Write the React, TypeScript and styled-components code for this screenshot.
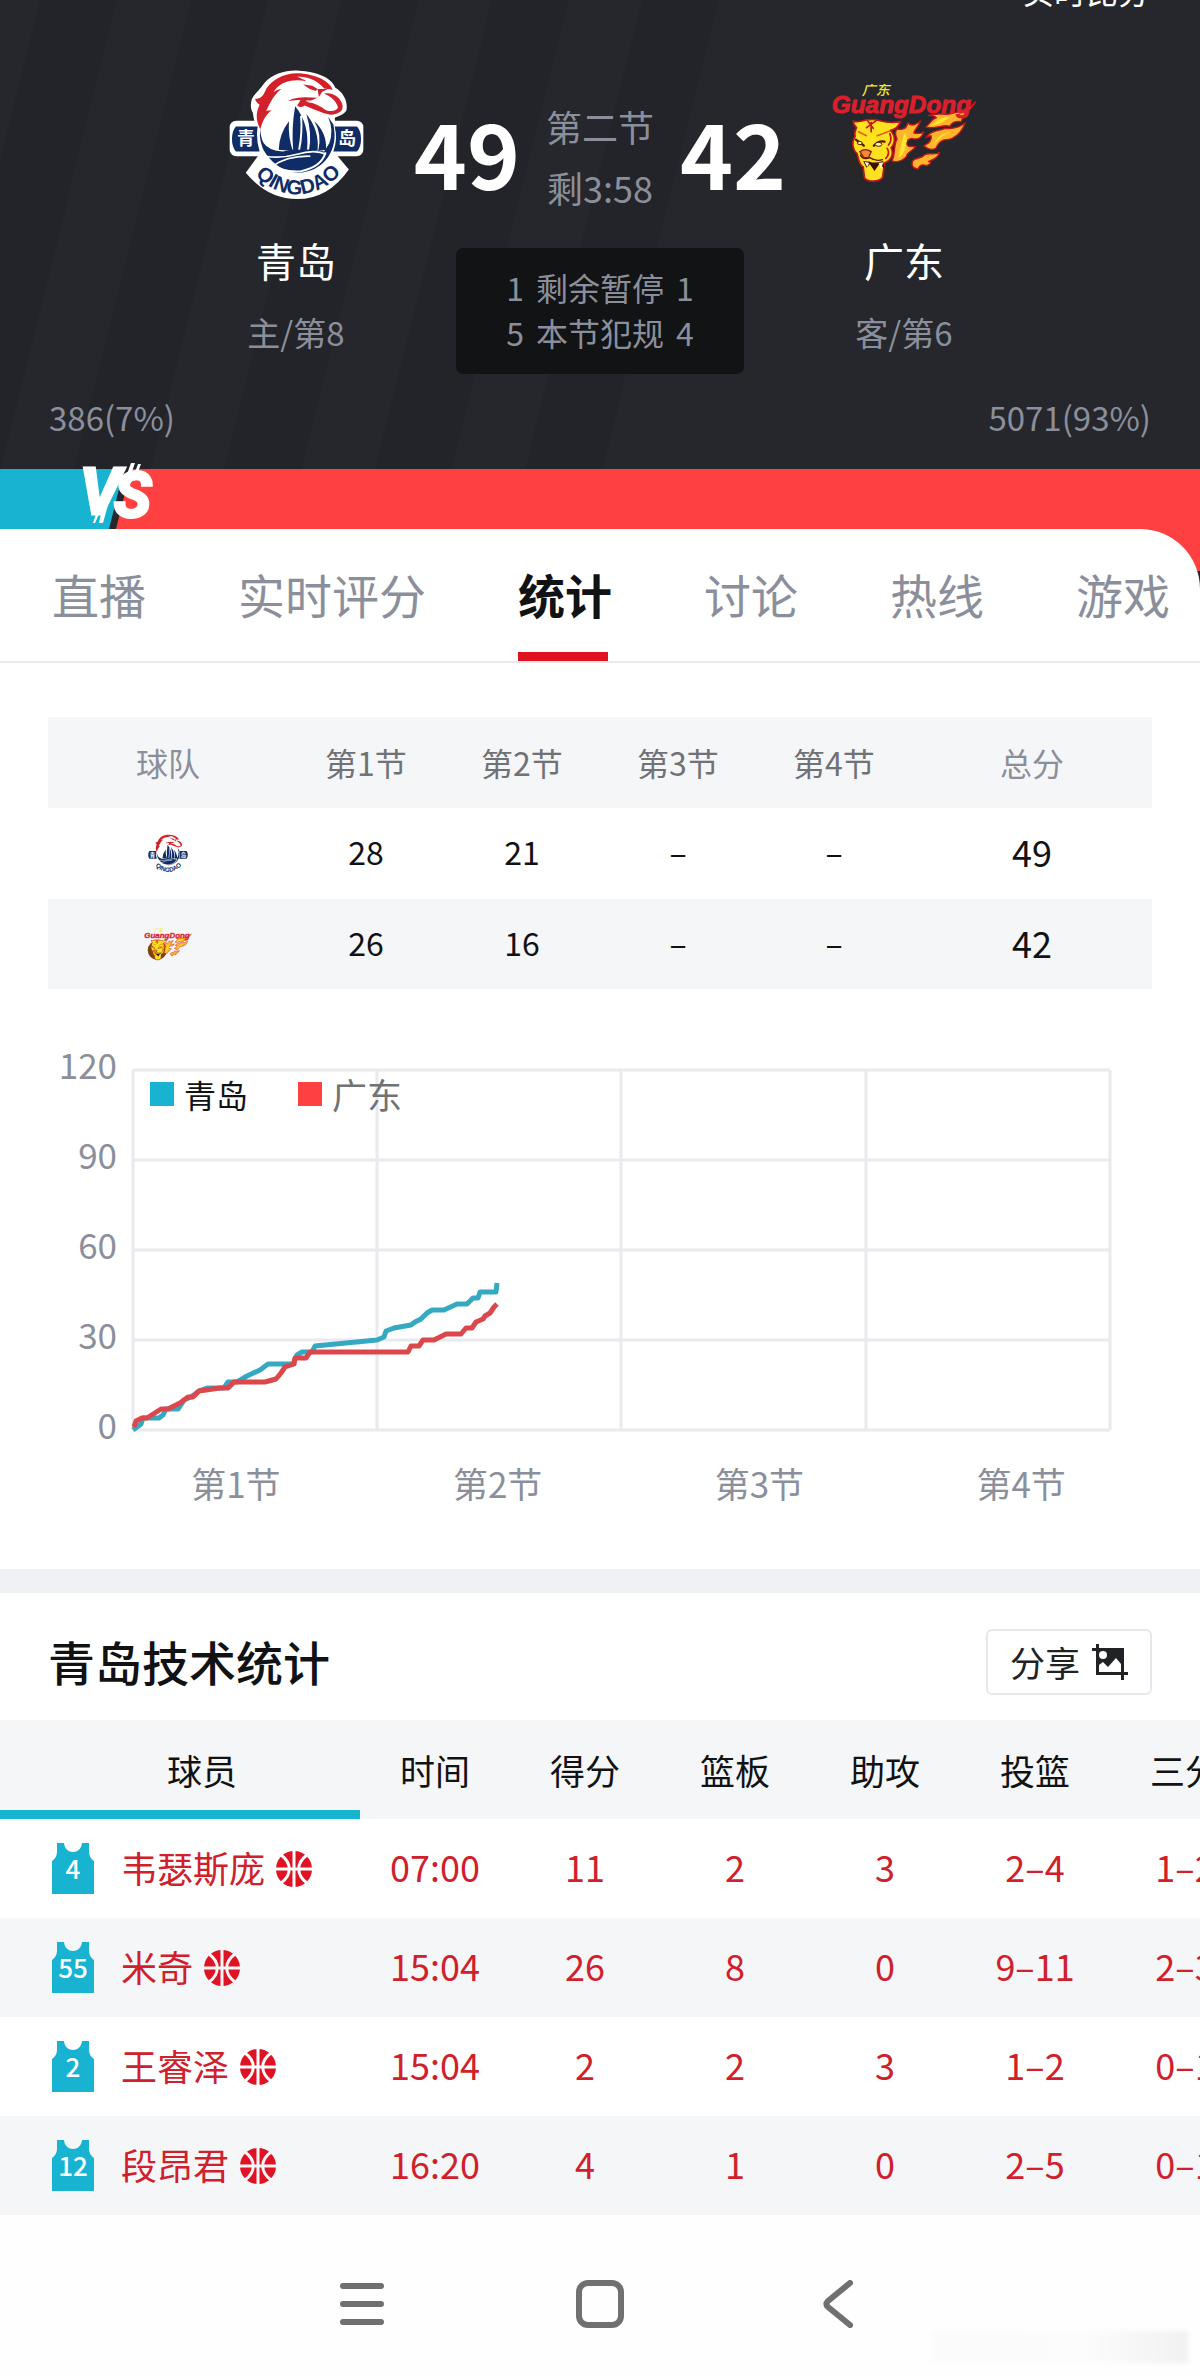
import React from "react";
import styled, { createGlobalStyle } from "styled-components";

const teal = "#17b3d1";
const red = "#ff4040";
const muted = "#8b8f9b";
const stripe = "#f5f6f8";
const ink = "#111214";

const GlobalStyle = createGlobalStyle`
  * { box-sizing: border-box; }
  body {
    margin: 0;
    background: #fff;
    color: ${ink};
    font-family: "Noto Sans CJK SC", "Noto Sans", sans-serif;
  }
  button { font: inherit; color: inherit; border: 0; background: none; padding: 0; cursor: pointer; }
  a { color: inherit; text-decoration: none; }
  table { border-collapse: collapse; border-spacing: 0; table-layout: fixed; }
  th, td { padding: 0; font-weight: 400; text-align: center; }
  svg { display: block; }
`;

const Page = styled.div`
  overflow: hidden;
`;

/* ---------- scoreboard ---------- */

const Scoreboard = styled.header`
  color: #fff;
  padding-bottom: 31px;
  background:
    linear-gradient(104deg, transparent 0 698px, #25272c 698px),
    repeating-linear-gradient(104deg, #25272c 0 39px, #222429 39px 114px, #25272c 114px 146px);
`;

const TopBar = styled.div`
  display: flex;
  align-items: flex-end;
  justify-content: flex-end;
  height: 24px;
  padding: 0 50px 16px;
  font-size: 32px;
  line-height: 36px;
`;

const Matchup = styled.div`
  display: grid;
  grid-template-columns: 1fr 368px 1fr;
  padding: 0 176px;
`;

const Team = styled.div`
  display: flex;
  flex-direction: column;
  align-items: center;
  padding-top: 45px;
`;

const LogoBox = styled.div`
  display: flex;
  align-items: center;
  height: 130px;
`;

const TeamName = styled.h2`
  margin: 31px 0 18px;
  font-size: 40px;
  line-height: 60px;
  font-weight: 400;
`;

const TeamRank = styled.span`
  color: ${muted};
  font-size: 33px;
  line-height: 48px;
`;

const Middle = styled.div`
  display: flex;
  flex-direction: column;
  align-items: center;
  padding-top: 72px;
`;

const ScoreLine = styled.div`
  display: flex;
  align-items: center;
  gap: 26px;
  white-space: nowrap;
`;

const Score = styled.strong`
  padding-bottom: 12px;
  font-size: 90px;
  line-height: 110px;
  font-weight: 700;
`;

const Clock = styled.div`
  color: ${muted};
  font-size: 36px;
  line-height: 61px;
  text-align: center;
`;

const FoulBox = styled.dl`
  margin: 30px 0 0;
  min-width: 288px;
  padding: 17px 0 19px;
  border-radius: 7px;
  background: #121315;
  color: ${muted};
  font-size: 32px;
  line-height: 45px;
`;

const FoulRow = styled.div`
  display: flex;
  justify-content: center;
  gap: 12px;
  dd { margin: 0; }
`;

const Votes = styled.div`
  display: flex;
  justify-content: space-between;
  margin-top: 22px;
  padding: 0 49px;
  color: ${muted};
  font-size: 33px;
  line-height: 42px;
`;

const VoteBar = styled.div`
  position: relative;
  height: 60px;
  background: ${red};
`;

const VoteBadge = styled.svg`
  position: absolute;
  left: 0;
  top: -8px;
`;

/* ---------- tabs ---------- */

const TabsBack = styled.div`
  background: linear-gradient(${red} 0 42px, #25272c 42px);
`;

const Tabs = styled.nav`
  display: flex;
  gap: 92px;
  height: 134px;
  padding-left: 52px;
  background: #fff;
  border-bottom: 2px solid #e8e9eb;
  border-top-right-radius: 60px;
`;

const Tab = styled.a<{ $active?: boolean }>`
  display: flex;
  flex: none;
  flex-direction: column;
  justify-content: space-between;
  padding-top: 30px;
  font-size: 47px;
  line-height: 70px;
  color: ${(p) => (p.$active ? ink : muted)};
  font-weight: ${(p) => (p.$active ? 700 : 400)};
  &::after {
    content: "";
    width: 90px;
    height: 9px;
    background: ${(p) => (p.$active ? "#e01222" : "transparent")};
  }
`;

/* ---------- quarter table ---------- */

const QuarterSection = styled.section`
  padding: 54px 48px 0;
`;

const QuarterTable = styled.table`
  width: 100%;
  font-size: 32px;
  tr { height: 91px; background: #fff; }
  thead tr, tbody tr:nth-child(even) { background: ${stripe}; }
  tbody tr:last-child { height: 90px; }
  th { padding-bottom: 2px; color: #707276; }
  th:first-child, th:last-child { color: ${muted}; }
  td { padding-bottom: 5px; }
  td:first-child { padding: 0; }
  td:last-child { font-size: 36px; }
  svg { margin: 0 auto; }
`;

/* ---------- chart ---------- */

const ChartSection = styled.section`
  padding: 55px 48px 64px 0;
`;

const ChartBody = styled.div`
  display: grid;
  grid-template-columns: 117px 1fr;
  column-gap: 16px;
  padding-right: 42px;
`;

const YAxis = styled.div`
  display: flex;
  flex-direction: column;
  justify-content: space-between;
  height: 400px;
  text-align: right;
  color: ${muted};
  font-size: 35px;
  line-height: 40px;
`;

const Plot = styled.div`
  display: grid;
  align-content: start;
  padding-top: 26px;
  > * { grid-area: 1 / 1; }
`;

const PlotSvg = styled.svg`
  width: 100%;
  height: 360px;
  overflow: visible;
`;

const Legend = styled.ul`
  display: flex;
  align-items: flex-start;
  align-self: start;
  gap: 50px;
  margin: 0;
  padding: 2px 0 0 17px;
  list-style: none;
`;

const LegendItem = styled.li<{ $color: string; $muted?: boolean }>`
  display: flex;
  align-items: center;
  gap: 10px;
  font-size: ${(p) => (p.$muted ? 35 : 32)}px;
  line-height: 44px;
  color: ${(p) => (p.$muted ? "#707276" : ink)};
  &::before {
    content: "";
    width: 24px;
    height: 24px;
    background: ${(p) => p.$color};
  }
`;

const XAxis = styled.div`
  display: grid;
  grid-template-columns: repeat(4, 1fr);
  margin-top: 17px;
  padding-left: 105px;
  text-align: center;
  color: ${muted};
  font-size: 35px;
  line-height: 44px;
`;

/* ---------- player table ---------- */

const Divider = styled.div`
  height: 24px;
  background: #f0f1f4;
`;

const SectionHead = styled.div`
  display: flex;
  align-items: center;
  justify-content: space-between;
  padding: 36px 48px 25px;
`;

const SectionTitle = styled.h3`
  margin: 0;
  padding-bottom: 2px;
  font-size: 47px;
  line-height: 60px;
  font-weight: 500;
`;

const ShareButton = styled.button`
  && {
    display: flex;
    align-items: center;
    gap: 12px;
    height: 66px;
    padding: 0 22px;
    border: 2px solid #e6e8ed;
    border-radius: 6px;
    font-size: 35px;
    line-height: 60px;
    color: #202226;
  }
`;

const StatsScroll = styled.div`
  overflow-x: auto;
  scrollbar-width: none;
`;

const StatsTable = styled.table`
  width: 1260px;
  font-size: 36px;
  tr { height: 99px; }
  thead tr, tbody tr:nth-child(even) { background: ${stripe}; }
  thead th:first-child { padding-left: 44px; box-shadow: inset 0 -9px 0 ${teal}; }
  thead { font-size: 35px; }
  tbody { color: #cf202c; }
  td { padding-bottom: 5px; }
  td:first-child { padding: 0; }
`;

const PlayerCell = styled.div`
  display: flex;
  align-items: center;
  padding-left: 52px;
  svg { flex: none; }
`;

const PlayerName = styled.span`
  margin: 0 11px 0 27px;
  padding-bottom: 3px;
`;

/* ---------- system bar ---------- */

const SystemBar = styled.footer`
  position: relative;
  display: flex;
  justify-content: center;
  gap: 190px;
  padding: 65px 0 47px;
  background: #fefefe;
  button { height: 48px; }
`;

const Smudge = styled.span`
  position: absolute;
  right: 12px;
  bottom: 12px;
  width: 256px;
  height: 32px;
  background: linear-gradient(90deg, #fbfbfb, #fcfcfc 60%, #f1f1f1);
  filter: blur(2px);
`;

/* ---------- drawings ---------- */

function QingdaoLogo({ width, height }: { width: number; height: number }) {
  const id = React.useId();
  const navy = "#0f2c66";
  return (
    <svg width={width} height={height} viewBox="80 200 416 404" role="img" aria-label="青岛">
      <defs>
        <path id={id} d="M150 512Q210 582 290 584Q372 582 436 506" />
      </defs>
      <g fill="#fff">
        <rect x="85" y="360" width="406" height="108" rx="20" />
        <path d="M172 466L134 518Q200 598 290 598Q384 598 447 508L408 462Z" />
        <circle cx="290" cy="408" r="122" />
        <path d="M172 390C160 372 158 350 155 335C146 320 150 306 152 296C158 280 178 264 190 246C215 216 260 205 296 208C346 211 396 228 406 260C430 274 446 302 439 330C428 346 412 346 404 352L410 390Z" />
      </g>
      <path d="M104 378H170Q164 416 176 454H104Q92 440 92 416Q92 392 104 378Z" fill={navy} />
      <path d="M472 378H404Q414 416 400 454H472Q484 440 484 416Q484 392 472 378Z" fill={navy} />
      <text x="134" y="434" fontSize="54" fontWeight="700" fill="#fff" textAnchor="middle">青</text>
      <text x="442" y="434" fontSize="54" fontWeight="700" fill="#fff" textAnchor="middle">岛</text>
      <g fill={navy}>
        <path d="M178 382Q172 430 196 462Q232 512 290 518Q352 516 384 470Q412 430 400 372L384 348Q402 390 388 428L372 454Q300 440 246 454Q204 452 188 428Q178 408 178 382Z" />
        <path d="M265 362Q236 400 234 448L277 452Q262 410 265 362Z" />
        <path d="M284 316Q272 380 278 452L320 448Q328 370 284 316Z" />
        <path d="M318 340Q336 400 326 450L352 450Q358 390 318 340Z" />
        <path d="M342 362Q366 400 354 452L378 448Q380 396 342 362Z" />
      </g>
      <g fill="none" stroke="#fff">
        <path d="M192 468Q240 476 290 462Q344 446 378 462" strokeWidth="5" />
        <path d="M212 500Q260 466 330 468" strokeWidth="5" />
        <path d="M376 456Q366 500 300 514Q270 516 244 508" strokeWidth="6" />
        <path d="M302 345Q306 400 296 448" strokeWidth="6" />
      </g>
      <g fill="#d3202a">
        <path d="M190 276C208 232 260 212 304 217C350 222 386 238 398 266L372 262C350 236 320 226 290 226C300 232 312 236 318 240C270 232 236 244 218 274C228 266 236 264 242 264C218 282 206 310 196 330L212 328C192 344 184 364 178 386C164 360 164 336 176 312C168 306 164 300 162 294C176 294 186 286 190 276Z" />
        <path d="M262 300C294 284 322 290 352 290C338 296 330 300 322 304C346 306 362 318 378 328C396 334 410 330 414 320C410 302 392 284 372 278C396 272 424 290 428 314C430 334 412 340 392 342C364 338 340 324 312 314C304 320 298 320 290 314L300 298C286 296 276 300 262 300Z" />
        <path d="M308 250L336 254L352 264L346 270C338 266 332 266 326 262Z" />
        <path d="M352 264L384 264L366 272L356 288Z" />
      </g>
      <path d="M318 300C344 300 366 308 390 324" fill="none" stroke="#fff" strokeWidth="4" />
      <text fontFamily="Liberation Sans, sans-serif" fontSize="62" fontWeight="700" fill={navy}>
        <textPath href={`#${id}`} startOffset="50%" textAnchor="middle">QINGDAO</textPath>
      </text>
    </svg>
  );
}

function GuangdongLogo({ width, height, ball }: { width: number; height: number; ball: string }) {
  return (
    <svg width={width} height={height} viewBox="30 35 440 300" role="img" aria-label="广东">
      <circle cx="152" cy="238" r="88" fill={ball} />
      <g fill="#ffb52b" stroke="#c4141c" strokeWidth="4" strokeLinejoin="round">
        <path d="M464 88C450 112 428 122 420 148C404 146 392 150 386 162C366 154 344 172 314 164C330 152 330 140 346 136C338 128 330 130 322 130C350 118 380 132 396 122C416 118 440 112 464 88Z" />
        <path d="M432 152C418 188 394 200 380 202C362 200 350 214 344 228C330 236 318 228 308 220C324 214 332 202 330 190C324 192 318 192 314 196C330 172 356 176 372 168C390 170 414 166 432 152Z" />
        <path d="M356 240C348 262 334 260 322 268C334 270 326 276 316 280C302 274 292 280 292 290C274 290 268 274 276 264C288 254 300 260 310 248C322 240 336 250 356 240Z" />
        <path d="M298 146C290 166 280 172 278 182C290 184 302 184 308 178C304 196 288 204 272 198C256 200 252 214 262 222C276 222 280 224 284 222C270 240 258 238 256 252C244 266 226 270 212 266C224 246 216 216 228 200C222 188 220 178 228 170C244 174 256 170 260 152C270 162 284 158 298 146Z" />
      </g>
      <g fill="#ffe92e">
        <path d="M384 134C366 150 350 158 328 160C350 146 352 136 384 134Z" />
        <path d="M252 180C240 206 240 226 232 256C252 246 252 222 258 204Z" />
        <path d="M392 178C370 184 350 200 336 222C346 196 362 182 392 178Z" />
      </g>
      <path
        d="M96 146C110 154 124 142 146 142C172 138 190 158 238 148C232 164 220 172 208 174C224 190 222 214 210 226C220 250 206 266 190 272L184 316C170 330 140 330 130 316L126 284C112 276 112 256 108 244C92 230 92 206 102 192C96 180 106 172 106 166C100 160 96 154 96 146Z"
        fill="#ffe21f"
        stroke="#c4141c"
        strokeWidth="5"
        strokeLinejoin="round"
      />
      <g fill="none" stroke="#5b1408" strokeLinecap="round">
        <path d="M140 146L156 168M166 144L136 166M150 150V178" stroke="#c4141c" strokeWidth="5" />
        <path d="M104 202L128 220M158 220Q172 204 190 208" strokeWidth="7" />
        <path d="M112 178L136 190M168 190L206 176" stroke="#e0601a" strokeWidth="5" />
        <path d="M118 248Q124 264 146 256Q164 268 184 262" strokeWidth="4" />
        <path d="M206 184Q214 204 202 218M198 228Q208 244 194 258" stroke="#c4141c" strokeWidth="5" />
      </g>
      <path d="M116 238Q132 226 150 238L142 256H128Z" fill="#f08a3a" stroke="#8c1a10" strokeWidth="4" />
      <ellipse cx="172" cy="216" rx="10" ry="6" fill="#fff7a8" stroke="#5b1408" strokeWidth="3" />
      <ellipse cx="116" cy="212" rx="7" ry="5" fill="#fff7a8" stroke="#5b1408" strokeWidth="3" />
      <path d="M126 266L136 286L146 276L160 296L174 276L190 288L186 266Q160 274 146 268Z" fill="#3a0d08" />
      <path d="M130 268L138 284L144 272ZM172 272L180 290L186 270Z" fill="#fff7d0" />
      <text x="122" y="69" fontSize="42" fontStyle="italic" fontWeight="500" fill="#f3e62c">广东</text>
      <text
        x="32"
        y="121"
        fontFamily="Liberation Sans, sans-serif"
        fontSize="73"
        fontStyle="italic"
        fontWeight="700"
        fill="#d9202c"
        stroke="#d9202c"
        strokeWidth="3"
      >
        GuangDong
      </text>
    </svg>
  );
}

function Versus() {
  return (
    <VoteBadge width="160" height="68" viewBox="0 462 160 68" role="img" aria-label="VS">
      <path d="M0 470H125L110 530H0Z" fill={teal} />
      <path d="M124 470H131L116 530H109Z" fill="#25272c" />
      <path d="M131 464H135L130 478H126ZM138 465H141L137 476H134ZM96 515H99L95 524H93ZM103 506H108L103 524H99Z" fill="#fff" />
      <g
        fill="#fff"
        stroke="#fff"
        strokeWidth="3"
        fontFamily="Liberation Sans Narrow, Roboto, sans-serif"
        fontWeight="700"
        fontStyle="italic"
      >
        <text x="80" y="515" fontSize="64">V</text>
        <text x="114" y="518" fontSize="62">S</text>
      </g>
    </VoteBadge>
  );
}

function Jersey({ number }: { number: number }) {
  return (
    <svg width="42" height="51" viewBox="0 0 42 51" role="img" aria-label={`${number}`}>
      <path d="M5 0H12C13 12 29 12 30 0H37V8C37 13 39 16 42 18V51H0V18C3 16 5 13 5 8Z" fill={teal} />
      <text x="21" y="36" fontSize="26" fontWeight="500" fill="#fff" textAnchor="middle">{number}</text>
    </svg>
  );
}

function Ball({ line }: { line: string }) {
  return (
    <svg width="36" height="36" viewBox="0 0 36 36" aria-hidden="true">
      <circle cx="18" cy="18" r="18" fill="#df1323" />
      <g fill="none" stroke={line} strokeWidth="3">
        <path d="M18 0V36M0 18H36" />
        <path d="M5 4C16 12 16 24 5 32M31 4C20 12 20 24 31 32" />
      </g>
    </svg>
  );
}

function ShareIcon() {
  return (
    <svg width="36" height="36" viewBox="0 0 36 36" fillRule="evenodd" fill="#202226" aria-hidden="true">
      <path d="M4 0H7V4H32V28H36V31H32V36H29V31H4V7H0V4H4ZM7 21V28H29V20L24 14L16 23L11 18ZM11 7A4 4 0 1 0 11 15A4 4 0 1 0 11 7Z" />
    </svg>
  );
}

/* ---------- data ---------- */

type Point = [number, number];

/* x runs from 0 to 977 over the four quarters, y is the running score */
const homeRun: Point[] = [
  [0, 0], [8, 2], [10, 4], [26, 4], [30, 5], [33, 7], [45, 7], [51, 10], [58, 11], [66, 13], [74, 14],
  [91, 14], [95, 16], [104, 16], [114, 18], [127, 20], [135, 22], [160, 22], [164, 25], [169, 26], [179, 26],
  [182, 28], [244, 30], [251, 31], [253, 33], [261, 34], [278, 35], [282, 36], [288, 37], [294, 39], [299, 40],
  [311, 40], [324, 42], [334, 42], [340, 44], [345, 44], [347, 46], [363, 46], [364, 49],
];
const awayRun: Point[] = [
  [1, 1], [3, 3], [9, 4], [14, 4], [28, 7], [35, 7], [47, 9], [55, 11], [60, 11], [66, 13], [87, 14], [95, 14],
  [101, 16], [132, 16], [143, 17], [148, 19], [152, 21], [161, 22], [162, 24], [173, 24], [177, 26], [275, 26],
  [278, 28], [286, 28], [290, 30], [301, 30], [313, 32], [328, 32], [333, 34], [339, 34], [343, 36], [350, 37],
  [352, 38], [357, 39], [361, 41], [364, 42],
];

const toPoints = (run: Point[]) => run.map(([x, score]) => `${x},${360 - score * 3}`).join(" ");

const tabs = ["直播", "实时评分", "统计", "讨论", "热线", "游戏"];
const quarters = ["第1节", "第2节", "第3节", "第4节"];
const statHeads = ["时间", "得分", "篮板", "助攻", "投篮", "三分"];
const players = [
  { number: 4, name: "韦瑟斯庞", stats: ["07:00", "11", "2", "3", "2–4", "1–2"] },
  { number: 55, name: "米奇", stats: ["15:04", "26", "8", "0", "9–11", "2–3"] },
  { number: 2, name: "王睿泽", stats: ["15:04", "2", "2", "3", "1–2", "0–1"] },
  { number: 12, name: "段昂君", stats: ["16:20", "4", "1", "0", "2–5", "0–1"] },
];

export default function App() {
  return (
    <Page>
      <GlobalStyle />
      <Scoreboard>
        <TopBar>实时比分</TopBar>
        <Matchup>
          <Team>
            <LogoBox><QingdaoLogo width={137} height={133} /></LogoBox>
            <TeamName>青岛</TeamName>
            <TeamRank>主/第8</TeamRank>
          </Team>
          <Middle>
            <ScoreLine>
              <Score>49</Score>
              <Clock>第二节<br />剩3:58</Clock>
              <Score>42</Score>
            </ScoreLine>
            <FoulBox>
              <FoulRow><dd>1</dd><dt>剩余暂停</dt><dd>1</dd></FoulRow>
              <FoulRow><dd>5</dd><dt>本节犯规</dt><dd>4</dd></FoulRow>
            </FoulBox>
          </Middle>
          <Team>
            <LogoBox><GuangdongLogo width={147} height={100} ball="#292626" /></LogoBox>
            <TeamName>广东</TeamName>
            <TeamRank>客/第6</TeamRank>
          </Team>
        </Matchup>
        <Votes><span>386(7%)</span><span>5071(93%)</span></Votes>
      </Scoreboard>
      <VoteBar><Versus /></VoteBar>

      <TabsBack>
        <Tabs>
          {tabs.map((t) => (
            <Tab key={t} href="#" $active={t === "统计"}>{t}</Tab>
          ))}
        </Tabs>
      </TabsBack>

      <QuarterSection>
        <QuarterTable>
          <colgroup>
            <col style={{ width: `${100 * 240 / 1104}%` }} />
            {quarters.map((q) => <col key={q} />)}
            <col style={{ width: `${100 * 240 / 1104}%` }} />
          </colgroup>
          <thead>
            <tr><th>球队</th>{quarters.map((q) => <th key={q}>{q}</th>)}<th>总分</th></tr>
          </thead>
          <tbody>
            <tr>
              <td><QingdaoLogo width={42} height={41} /></td>
              <td>28</td><td>21</td><td>–</td><td>–</td><td>49</td>
            </tr>
            <tr>
              <td><GuangdongLogo width={48} height={33} ball="#7c4312" /></td>
              <td>26</td><td>16</td><td>–</td><td>–</td><td>42</td>
            </tr>
          </tbody>
        </QuarterTable>
      </QuarterSection>

      <ChartSection>
        <ChartBody>
          <YAxis>{[120, 90, 60, 30, 0].map((n) => <span key={n}>{n}</span>)}</YAxis>
          <Plot>
            <PlotSvg viewBox="0 0 977 360" preserveAspectRatio="none" role="img" aria-label="得分走势">
              <g stroke="#e9eaed" strokeWidth="3" fill="none">
                <path d="M0 0H977M0 90H977M0 180H977M0 270H977M0 360H977" />
                <path d="M0 0V360M244 0V360M488 0V360M733 0V360M977 0V360" />
              </g>
              <g fill="none" strokeWidth="5" strokeLinejoin="round">
                <polyline points={toPoints(homeRun)} stroke="#35a9c1" />
                <polyline points={toPoints(awayRun)} stroke="#dc474c" />
              </g>
            </PlotSvg>
            <Legend>
              <LegendItem $color={teal}>青岛</LegendItem>
              <LegendItem $color={red} $muted>广东</LegendItem>
            </Legend>
          </Plot>
        </ChartBody>
        <XAxis>{quarters.map((q) => <span key={q}>{q}</span>)}</XAxis>
      </ChartSection>

      <Divider />

      <section>
        <SectionHead>
          <SectionTitle>青岛技术统计</SectionTitle>
          <ShareButton type="button">分享<ShareIcon /></ShareButton>
        </SectionHead>
        <StatsScroll>
          <StatsTable>
            <colgroup>
              <col style={{ width: 360 }} />
              {statHeads.map((h) => <col key={h} />)}
            </colgroup>
            <thead>
              <tr><th>球员</th>{statHeads.map((h) => <th key={h}>{h}</th>)}</tr>
            </thead>
            <tbody>
              {players.map((p, i) => (
                <tr key={p.number}>
                  <td>
                    <PlayerCell>
                      <Jersey number={p.number} />
                      <PlayerName>{p.name}</PlayerName>
                      <Ball line={i % 2 ? stripe : "#fff"} />
                    </PlayerCell>
                  </td>
                  {p.stats.map((s, j) => <td key={j}>{s}</td>)}
                </tr>
              ))}
            </tbody>
          </StatsTable>
        </StatsScroll>
      </section>

      <SystemBar>
        <button type="button" aria-label="菜单">
          <svg width="48" height="48" viewBox="0 0 48 48" stroke="#707070" strokeWidth="6" strokeLinecap="round">
            <path d="M5 6H43M5 24H43M5 42H43" />
          </svg>
        </button>
        <button type="button" aria-label="主页">
          <svg width="48" height="48" viewBox="0 0 48 48" fill="none" stroke="#707070" strokeWidth="6">
            <rect x="3" y="3" width="42" height="42" rx="9" />
          </svg>
        </button>
        <button type="button" aria-label="返回">
          <svg width="48" height="48" viewBox="0 0 48 48" fill="none" stroke="#707070" strokeWidth="6" strokeLinecap="round" strokeLinejoin="round">
            <path d="M36 3L14 21Q11 24 14 27L36 45" />
          </svg>
        </button>
        <Smudge />
      </SystemBar>
    </Page>
  );
}
